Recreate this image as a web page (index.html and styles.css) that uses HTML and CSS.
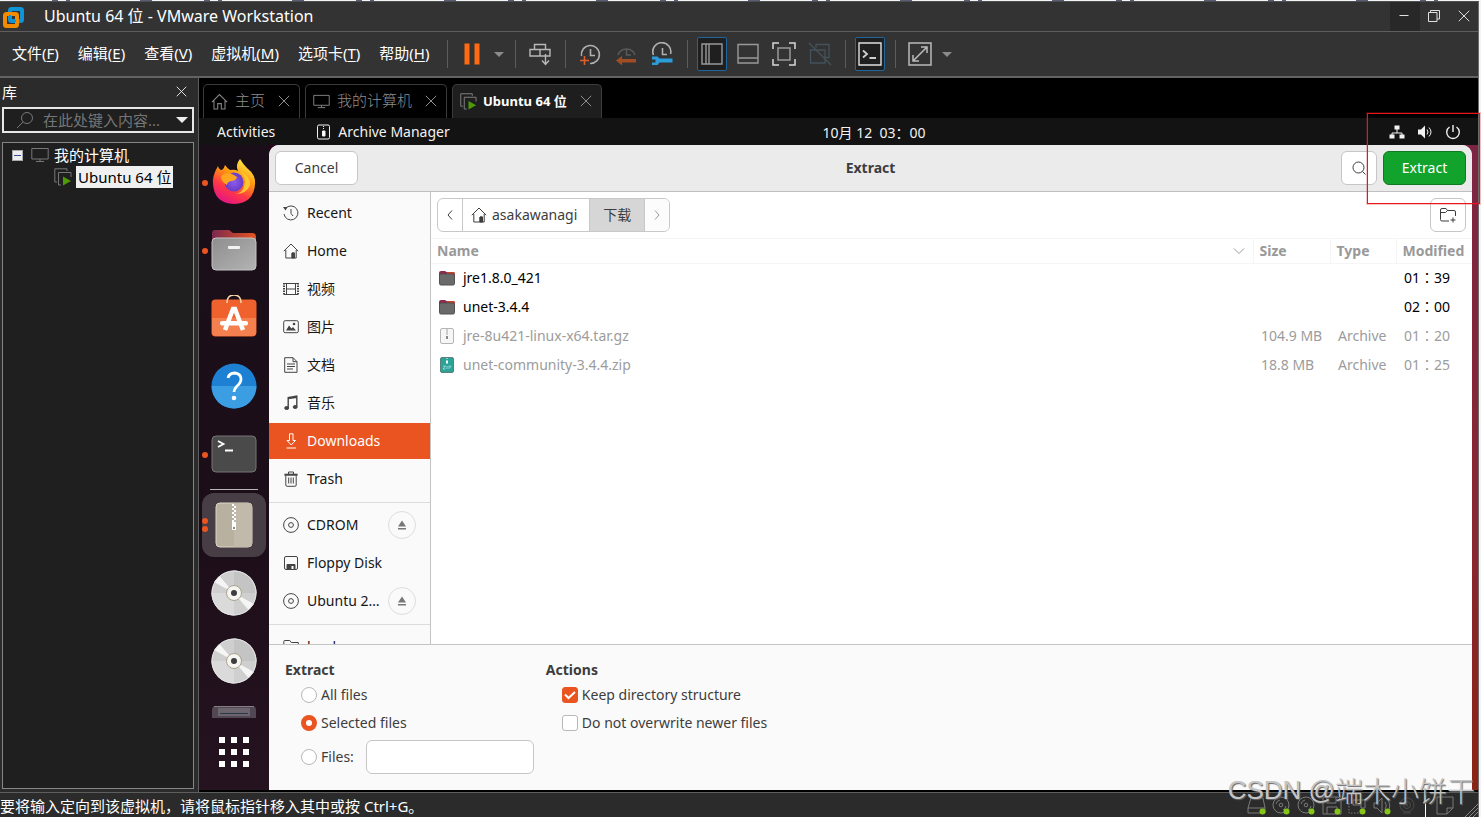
FILE: index.html
```html
<!DOCTYPE html>
<html lang="zh-CN">
<head>
<meta charset="utf-8">
<title>Ubuntu 64 位 - VMware Workstation</title>
<link rel="stylesheet" href="styles.css">
</head>
<body>
<svg class="defs" aria-hidden="true">
  <symbol id="i-close" viewBox="0 0 12 12"><path d="M.8.8l10.400 10.400M11.200.8L.8 11.200"/></symbol>
  <symbol id="i-home" viewBox="0 0 16 16"><path d="M.8 8.200L8 1l7.200 7.200M2.800 7v8h10.400V7M9 15v-5h2.500v5"/><path d="M9 10h2.500v5H9z" fill="currentColor"/></symbol>
  <symbol id="i-home-line" viewBox="0 0 16 16"><path d="M.8 8.500L8 1.500l7.200 7M2.800 7v8h3.500v-5h3.400v5h3.500V7"/></symbol>
  <symbol id="i-monitor" viewBox="0 0 18 16"><path d="M.8 1.500h16.400v10.500H.8zM9 12v2M5 14.500h8"/></symbol>
  <symbol id="i-vm" viewBox="0 0 18 18"><path d="M3 14H.8V.8H13V3M7 17H4.500V4.500H17V9"/><path d="M9 8.500l8 4.500-8 4.500z" fill="#4e9a06" stroke="none"/></symbol>
  <symbol id="i-disc" viewBox="0 0 16 16"><circle cx="8" cy="8" r="7.400"/><circle cx="8" cy="8" r="2.400"/></symbol>
  <symbol id="i-eject" viewBox="0 0 10 10"><path d="M5 .5L9 6.500H1zM1 8h8v1.500H1z" fill="#777" stroke="none"/></symbol>
  <symbol id="i-dvd" viewBox="0 0 46 46">
    <circle cx="23" cy="23" r="22.500" fill="#cfcfcf"/>
    <path d="M23 23L23 .5A22.500 22.500 0 0 1 45.500 23z" fill="#c4c4c4"/><path d="M23 23v22.500A22.500 22.500 0 0 1 .5 23z" fill="#dadada"/>
    <path d="M23 23L3 12 8.500 6zM23 23l20 11-5.500 6z" fill="#f5f5f5"/>
    <circle cx="23" cy="23" r="22" fill="none" stroke="#e4e4e4"/>
    <circle cx="23" cy="23" r="7.500" fill="#f6f5f2" stroke="#aca38d"/><circle cx="23" cy="23" r="3" fill="#3d3d3d"/>
  </symbol>
  <symbol id="i-folder" viewBox="0 0 16 16">
    <path d="M0 3a2 2 0 0 1 2-2h4l1.500 1H14a2 2 0 0 1 2 2v4H0z" fill="#8c2a48" stroke="none"/><path d="M8 2h6a2 2 0 0 1 2 2v3H8z" fill="#c8412b" stroke="none"/>
    <rect x=".5" y="4" width="15" height="11" rx="1.500" fill="#6a6a6a" stroke="#505050"/>
  </symbol>
  <symbol id="i-cd" viewBox="0 0 20 20"><circle cx="9" cy="9" r="8"/><circle cx="9" cy="9" r="1.800"/><path d="M4 8a5 5 0 0 1 4-4M14 10a5 5 0 0 1-3 4"/><circle cx="14.500" cy="15.500" r="3" fill="#84c516" stroke="none"/></symbol>
</svg>

<div class="desktop-edge"></div>
<div class="window">
  <header class="titlebar">
    <svg class="logo" viewBox="0 0 22 22"><g fill="none" stroke-width="4"><rect x="8" y="3" width="12" height="12" rx="1.500" stroke="#0f95d7"/><rect x="3" y="8" width="12" height="12" rx="1.500" stroke="#f38b00"/><path d="M8 9V15H14" stroke="#0f95d7" stroke-width="2"/></g></svg>
    <h1 class="title">Ubuntu 64 位 - VMware Workstation</h1>
    <div class="win-controls">
      <button class="win-btn win-btn-min" aria-label="最小化"><svg class="ico12" viewBox="0 0 12 12"><path d="M1.500 5.500h9"/></svg></button>
      <button class="win-btn" aria-label="还原"><svg class="ico12" viewBox="0 0 12 12"><path d="M.5 2.500h8.500v9H.5zM2.500 2.500V.5h9v8.500H9"/></svg></button>
      <button class="win-btn win-btn-close" aria-label="关闭"><svg class="ico12"><use href="#i-close"/></svg></button>
    </div>
  </header>

  <div class="menubar">
    <nav class="menus">
      <button class="menu">文件(<u>F</u>)</button>
      <button class="menu">编辑(<u>E</u>)</button>
      <button class="menu">查看(<u>V</u>)</button>
      <button class="menu">虚拟机(<u>M</u>)</button>
      <button class="menu">选项卡(<u>T</u>)</button>
      <button class="menu">帮助(<u>H</u>)</button>
    </nav>
    <div class="tools">
      <span class="tool-sep"></span>
      <button class="tool" aria-label="挂起"><svg class="ico24" viewBox="0 0 24 24"><path d="M4.500 1.500h5v21h-5zM14.500 1.500h5v21h-5z" fill="#ff6a13" stroke="none"/></svg></button>
      <button class="caret" aria-label="电源选项"></button>
      <span class="tool-sep"></span>
      <button class="tool" aria-label="发送 Ctrl+Alt+Del"><svg class="ico24" viewBox="0 0 24 24"><path d="M6.500 7.500v-5h11v5M2 7.500h20v6.500H2zM12 7.500V14M17.500 12v10M14 18.500l3.500 4 3.500-4" stroke="#b8b8b8" stroke-width="1.400"/></svg></button>
      <span class="tool-sep"></span>
      <button class="tool" aria-label="拍摄快照"><svg class="ico24" viewBox="0 0 24 24"><path d="M3.500 14A9 9 0 1 1 12 21.500M12.500 7v6.500H17" stroke="#b0b0b0" stroke-width="1.600"/><path d="M6.500 14v9M2 18.500h9" stroke="#e0602b" stroke-width="1.600"/></svg></button>
      <button class="tool" aria-label="恢复快照"><svg class="ico24" viewBox="0 0 24 24"><path d="M4 13A9 9 0 0 1 21 13M12.500 7v6H17" stroke="#5a5a5a" stroke-width="1.500"/><path d="M2 18.500l6-4.500v3h14v3.500H8v3z" fill="#a04d24" stroke="none"/></svg></button>
      <button class="tool" aria-label="管理快照"><svg class="ico24" viewBox="0 0 24 24"><path d="M3.500 13A9 9 0 1 1 20.500 12M12.500 6v6.500H17" stroke="#b0b0b0" stroke-width="1.600"/><path d="M2 14.500h5.500l2 2H22.500v4H9.500l-2 2.500H2V20.500h3.500v-3H2z" fill="#2d9cdb" stroke="none"/></svg></button>
      <span class="tool-sep"></span>
      <button class="tool tool-on" aria-label="显示库"><svg class="ico24" viewBox="0 0 24 24"><path d="M2 2h20v20H2zM9 2v20M6 2v20" stroke="#999" stroke-width="1.400"/></svg></button>
      <button class="tool" aria-label="缩略图栏"><svg class="ico24" viewBox="0 0 24 24"><path d="M2 2.500h20v18.500H2zM2 16h20" stroke="#999" stroke-width="1.400"/></svg></button>
      <button class="tool" aria-label="全屏"><svg class="ico24" viewBox="0 0 24 24"><path d="M1 7V1h6M17 1h6v6M23 17v6h-6M7 23H1v-6" stroke="#d8d8d8" stroke-width="1.500"/><path d="M6 6h12v12H6z" stroke="#999" stroke-width="1.500"/></svg></button>
      <button class="tool" aria-label="Unity" disabled><svg class="ico24" viewBox="0 0 24 24"><path d="M8 6V2.500h13v13h-4M2.500 8H17v13H2.500zM1 1l22 22" stroke="#44525c" stroke-width="1.300"/></svg></button>
      <span class="tool-sep"></span>
      <button class="tool tool-on" aria-label="控制台视图"><svg class="ico24" viewBox="0 0 24 24"><path d="M1 1h22v22H1z" stroke="#e0e0e0" stroke-width="1.400"/><path d="M5 8.500l4 3.500-4 3.500M11.500 16H18" stroke="#d0d0d0" stroke-width="1.800"/></svg></button>
      <span class="tool-sep"></span>
      <button class="tool" aria-label="自由拉伸"><svg class="ico24" viewBox="0 0 24 24"><path d="M1 1h22v22H1z" stroke="#bbb" stroke-width="1.500"/><path d="M5 19L19 5M13 5h6v6M5 13v6h6" stroke="#bbb" stroke-width="1.500"/></svg></button>
      <button class="caret" aria-label="拉伸选项"></button>
    </div>
  </div>

  <div class="workspace">
    <aside class="library">
      <div class="library-head"><h2 class="library-title">库</h2><button class="plain" aria-label="关闭库"><svg class="ico12 bright"><use href="#i-close"/></svg></button></div>
      <div class="search">
        <svg class="search-ico" viewBox="0 0 18 18"><circle cx="11" cy="7" r="5.500"/><path d="M7 11l-6 6"/></svg>
        <input class="search-input" type="text" placeholder="在此处键入内容..." aria-label="搜索">
        <span class="search-caret"></span>
      </div>
      <div class="tree">
        <div class="tree-row"><button class="expander" aria-label="折叠"></button><svg class="tree-ico"><use href="#i-monitor"/></svg><span>我的计算机</span></div>
        <div class="tree-row tree-child"><svg class="tree-ico"><use href="#i-vm"/></svg><span class="tree-selected">Ubuntu 64 位</span></div>
      </div>
    </aside>

    <main class="console">
      <div class="tabs">
        <div class="tab"><svg class="tab-ico"><use href="#i-home-line"/></svg><span class="tab-label">主页</span><button class="plain" aria-label="关闭主页"><svg class="ico12"><use href="#i-close"/></svg></button></div>
        <div class="tab"><svg class="tab-ico"><use href="#i-monitor"/></svg><span class="tab-label">我的计算机</span><button class="plain" aria-label="关闭我的计算机"><svg class="ico12"><use href="#i-close"/></svg></button></div>
        <div class="tab tab-active"><svg class="tab-ico"><use href="#i-vm"/></svg><span class="tab-label">Ubuntu 64 位</span><button class="plain" aria-label="关闭 Ubuntu"><svg class="ico12"><use href="#i-close"/></svg></button></div>
      </div>

      <div class="guest">
        <div class="topbar">
          <div class="topbar-left">
            <button class="top-btn">Activities</button>
            <button class="top-btn top-app"><svg class="app-ico" viewBox="0 0 14 16"><rect x="1" y="1" width="12" height="14" rx="1.500"/><path d="M7 2v4" stroke-dasharray="1 1"/><path d="M6 7h2.500v5H6z" fill="#fff"/></svg>Archive Manager</button>
          </div>
          <time class="clock">10月 12&nbsp; 03：00</time>
          <div class="topbar-right">
            <svg class="status-ico" viewBox="0 0 16 16"><path d="M8 5v4M3 12V9h10v3"/><path d="M5.500 1.500h5v4h-5zM.5 10.500h5v4h-5zM10.500 10.500h5v4h-5z" fill="#f2f2f2" stroke="none"/></svg>
            <svg class="status-ico" viewBox="0 0 16 16"><path d="M1 5.500h3L8 1.500v13l-4-4H1z" fill="#f2f2f2" stroke="none"/><path d="M10 5.500q2 2.500 0 5M12 3.500q4 4.500 0 9"/></svg>
            <svg class="status-ico" viewBox="0 0 16 16"><path d="M8 1v7M4.500 3A6.300 6.300 0 1 0 11.500 3" stroke-width="1.400"/></svg>
          </div>
        </div>

        <div class="desktop">
          <nav class="dock">
            <button class="dock-item run1" aria-label="Firefox"><svg class="dock-ico" viewBox="0 0 46 46">
              <defs><linearGradient id="fx" x1=".8" y1="0" x2=".3" y2="1"><stop offset="0" stop-color="#fff44f"/><stop offset=".4" stop-color="#ff980e"/><stop offset=".7" stop-color="#ff3647"/><stop offset="1" stop-color="#e31587"/></linearGradient><radialGradient id="fp"><stop offset="0" stop-color="#8b5cf0"/><stop offset="1" stop-color="#6b3bc4"/></radialGradient></defs>
              <path d="M7 7q1 4 4 4 2-1 3-5 2 3 5 5 5-1 8 1-3-6 2-12 3 5 7 9 9 7 8 16-1 19-21 20Q3 44 2 25 1 17 7 7z" fill="url(#fx)"/>
              <circle cx="23" cy="23" r="9.500" fill="url(#fp)"/>
              <path d="M10 17q6-5 11-2l5 3q-1 4-6 4-4 1-4 4-6-3-6-9z" fill="#ffa51e"/><path d="M28 12q9 6 5 16-2 6-9 7 12 0 15-9 1-9-11-14z" fill="#ffc52e"/></svg></button>
            <button class="dock-item run1" aria-label="Files"><svg class="dock-ico" viewBox="0 0 46 46"><defs><linearGradient id="fl"><stop offset="0" stop-color="#7a2850"/><stop offset="1" stop-color="#e95420"/></linearGradient><linearGradient id="fg" x1="0" y1="0" x2="1" y2="1"><stop offset="0" stop-color="#8e8e8e"/><stop offset="1" stop-color="#b3b3b3"/></linearGradient></defs><path d="M1 6q0-3 3-3h14l4 3h19q4 0 4 4v8H1z" fill="url(#fl)"/><rect x="1" y="11" width="44" height="32" rx="4" fill="url(#fg)" stroke="#c4c4c4"/><rect x="17" y="19" width="12" height="3" rx="1" fill="#f2f2f2"/></svg></button>
            <button class="dock-item" aria-label="Ubuntu Software"><svg class="dock-ico" viewBox="0 0 46 46"><rect x=".5" y="4.500" width="45" height="37" rx="4" fill="#f0622d"/><path d="M1 23h44v14q0 4-4 4H5q-4 0-4-4z" fill="#f47f4f"/><path d="M16 8q0-8 7-8t7 8" fill="none" stroke="#f5d7a8" stroke-width="1.500"/><path d="M14 35l8-21h2l8 21" fill="none" stroke="#fff" stroke-width="4.500"/><rect x="9" y="26" width="28" height="4.500" rx="2" fill="#fff"/></svg></button>
            <button class="dock-item" aria-label="Help"><svg class="dock-ico" viewBox="0 0 46 46"><circle cx="23" cy="23" r="22.500" fill="#1d80d3"/><path d="M.5 23h45a22.500 22.500 0 0 1-45 0z" fill="#3b9de2"/><path d="M17 15q1-5 7-5 6 1 6 6 0 4-4 7-3 3-3 6" fill="none" stroke="#fff" stroke-width="2.800"/><circle cx="23" cy="35" r="2.300" fill="#fff"/></svg></button>
            <button class="dock-item run1" aria-label="Terminal"><svg class="dock-ico" viewBox="0 0 46 46"><rect x="1" y="5" width="44" height="36" rx="4" fill="#4a4a4a" stroke="#747474"/><path d="M7 10l5.500 3L7 16M14 19.500h8" fill="none" stroke="#fff" stroke-width="1.800"/></svg></button>
            <hr class="dock-sep">
            <button class="dock-item dock-current run2" aria-label="Archive Manager"><svg class="dock-ico" viewBox="0 0 46 46"><rect x="5" y="1" width="36" height="44" rx="4" fill="#b9b1a0" stroke="#dcd7c8"/><path d="M23 1h14q4 0 4 4v36q0 4-4 4H23z" fill="#c1baab"/><path d="M22 2v18" stroke="#fff" stroke-width="2" stroke-dasharray="2 2"/><path d="M24 4v18" stroke="#fff" stroke-width="2" stroke-dasharray="2 2"/><path d="M21 20h4v8h-4z" fill="#fff"/><path d="M22 25h2v2h-2z" fill="#888"/></svg></button>
            <button class="dock-item" aria-label="CDROM"><svg class="dock-ico"><use href="#i-dvd"/></svg></button>
            <button class="dock-item" aria-label="Ubuntu 22.04"><svg class="dock-ico"><use href="#i-dvd"/></svg></button>
            <button class="dock-clip" aria-label="Floppy Disk"><svg class="floppy-ico" viewBox="0 0 46 13"><path d="M1 13V5q0-4 4-4h36q4 0 4 4v8z" fill="#514853"/><path d="M3 1.500h40" stroke="#857e86"/><path d="M7 3h32v8H7z" fill="#6d656e"/><path d="M9 8.500h28" stroke="#27394a"/></svg></button>
            <button class="apps" aria-label="Show Applications"><svg class="apps-ico" viewBox="0 0 30 30"><path d="M3 0v30M15 0v30M27 0v30" stroke="#fff" stroke-width="6" stroke-dasharray="6 6"/></svg></button>
          </nav>

          <section class="dialog">
            <header class="dialog-head">
              <button class="btn btn-text">Cancel</button>
              <h2 class="dialog-title">Extract</h2>
              <div class="head-actions">
                <button class="btn btn-icon" aria-label="Search"><svg class="ico16" viewBox="0 0 16 16"><circle cx="7.500" cy="7.500" r="5.500"/><path d="M11.500 11.500l3 3"/></svg></button>
                <button class="btn btn-text btn-go">Extract</button>
              </div>
            </header>
            <div class="dialog-body">
              <nav class="places">
                <a class="place" href="#"><svg class="ico16" viewBox="0 0 16 16"><path d="M2.500 3.500A7 7 0 1 1 1 9M8 4v4.500l2 2.500"/><path d="M0 2l4.500 0-2 3.500z" fill="currentColor" stroke="none"/></svg>Recent</a>
                <a class="place" href="#"><svg class="ico16"><use href="#i-home"/></svg>Home</a>
                <a class="place" href="#"><svg class="ico16" viewBox="0 0 16 16"><path d="M1 2v12M15 2v12" stroke-width="2" stroke-dasharray="1.500 1"/><path d="M3.500 2v12M12.500 2v12M1 2.500h14M1 13.500h14M3.500 8h9"/></svg>视频</a>
                <a class="place" href="#"><svg class="ico16" viewBox="0 0 16 16"><rect x=".7" y="1.700" width="14.600" height="12" rx="1.500"/><path d="M3 11.500l3-5 2.500 3 1.500-1.500 3 3.500z" fill="currentColor" stroke="none"/><circle cx="11" cy="5" r="1.300" fill="currentColor" stroke="none"/></svg>图片</a>
                <a class="place" href="#"><svg class="ico16" viewBox="0 0 16 16"><path d="M1.700.7h8.300l4 4v10.600H1.700zM10 .7v4h4M4 7h8M4 9.500h8M4 12h6"/></svg>文档</a>
                <a class="place" href="#"><svg class="ico16" viewBox="0 0 16 16"><path d="M5.200 12.500V2.500L13.800 1v10.500M5.200 3.500l8.600-1.300" stroke-width="1.400"/><ellipse cx="3.700" cy="13" rx="2" ry="1.500" fill="currentColor"/><ellipse cx="12.200" cy="12" rx="2" ry="1.500" fill="currentColor"/></svg>音乐</a>
                <a class="place place-active" href="#"><svg class="ico16" viewBox="0 0 16 16"><path d="M6.500.8h3.500V7.500h2.500L8.200 12 4 7.500h2.500zM3.500 15h9.500"/></svg>Downloads</a>
                <a class="place" href="#"><svg class="ico16" viewBox="0 0 16 16"><path d="M1.500 4h13M5.500 3V1h5v2M2.800 4.500v9.500q0 1.300 1.300 1.300h7.800q1.300 0 1.300-1.300V4.500M5.700 6.500v6M8 6.500v6M10.300 6.500v6"/><path d="M1.500 2.700h13v1.800h-13z" fill="currentColor" stroke="none"/></svg>Trash</a>
                <hr class="places-sep">
                <div class="place-line"><a class="place" href="#"><svg class="ico16"><use href="#i-disc"/></svg>CDROM</a><button class="eject" aria-label="Eject CDROM"><svg class="eject-ico"><use href="#i-eject"/></svg></button></div>
                <a class="place" href="#"><svg class="ico16" viewBox="0 0 16 16"><rect x="1.500" y="1.500" width="13" height="13" rx="1.500"/><path d="M4 14V9.500h8V14z" fill="currentColor"/><path d="M8.500 11h2v3h-2z" fill="#fff" stroke="none"/></svg>Floppy Disk</a>
                <div class="place-line"><a class="place" href="#"><svg class="ico16"><use href="#i-disc"/></svg>Ubuntu 2…</a><button class="eject" aria-label="Eject Ubuntu"><svg class="eject-ico"><use href="#i-eject"/></svg></button></div>
                <hr class="places-sep">
                <a class="place" href="#"><svg class="ico16" viewBox="0 0 16 16"><path d="M.8 14V2.500q0-1 1-1h5l1.500 2h7v10.500z"/></svg>book</a>
              </nav>
              <section class="files">
                <div class="files-bar">
                  <div class="path">
                    <button class="crumb crumb-nav" aria-label="Back"><svg class="ico12" viewBox="0 0 12 12"><path d="M8 1.500L4 6l4 4.500"/></svg></button>
                    <button class="crumb"><svg class="ico16"><use href="#i-home"/></svg>asakawanagi</button>
                    <button class="crumb crumb-on">下载</button>
                    <button class="crumb crumb-nav crumb-off" aria-label="Forward"><svg class="ico12" viewBox="0 0 12 12"><path d="M4 1.500L8 6l-4 4.500"/></svg></button>
                  </div>
                  <button class="btn btn-icon" aria-label="New folder"><svg class="folder-new" viewBox="0 0 18 16"><path d="M10 14H3q-1.500 0-1.500-1.500V3q0-1.500 1.500-1.500h4l1.500 2H15q1.500 0 1.500 1.500v4M1.500 5.500h5l2-2M14 10.500v5M11.500 13h5"/></svg></button>
                </div>
                <table class="list">
                  <thead><tr><th class="c-name"><span class="th-in">Name<svg class="ico12" viewBox="0 0 12 12"><path d="M1 3.500l5 5 5-5"/></svg></span></th><th class="c-size">Size</th><th class="c-type">Type</th><th class="c-mod">Modified</th></tr></thead>
                  <tbody>
                    <tr><td><span class="file"><svg class="ico16"><use href="#i-folder"/></svg>jre1.8.0_421</span></td><td></td><td></td><td class="time">01：39</td></tr>
                    <tr><td><span class="file"><svg class="ico16"><use href="#i-folder"/></svg>unet-3.4.4</span></td><td></td><td></td><td class="time">02：00</td></tr>
                    <tr class="dim"><td><span class="file"><svg class="ico16" viewBox="0 0 16 16"><rect x="1.500" y=".5" width="13" height="15" rx="1.500" fill="#f6f6f6" stroke="#b5b5b5"/><path d="M8 1.500v6" stroke="#888" stroke-width="1.500" stroke-dasharray="1 1"/><path d="M7 8h2v3H7z" fill="#888" stroke="none"/></svg>jre-8u421-linux-x64.tar.gz</span></td><td>104.9 MB</td><td>Archive</td><td class="time">01：20</td></tr>
                    <tr class="dim"><td><span class="file"><svg class="ico16" viewBox="0 0 16 16"><rect x="1.500" y=".5" width="13" height="15" rx="1.500" fill="#2ba399" stroke="#5a817e"/><path d="M8 1v3" stroke="#fff" stroke-dasharray="1 1"/><path d="M7 4h2v2.500H7z" fill="#fff" stroke="none"/><path d="M4 9h2.500L4 12h2.500M8 9v3M10 12V9h1.500q1 1-.5 1.500" stroke="#a9e0da" stroke-width=".8"/></svg>unet-community-3.4.4.zip</span></td><td>18.8 MB</td><td>Archive</td><td class="time">01：25</td></tr>
                  </tbody>
                </table>
              </section>
            </div>
            <form class="options">
              <fieldset class="group"><legend class="legend">Extract</legend>
                <label class="opt"><input class="radio" type="radio" name="scope">All files</label>
                <label class="opt"><input class="radio" type="radio" name="scope" checked>Selected files</label>
                <div class="opt-files"><label class="opt"><input class="radio" type="radio" name="scope">Files:</label><input class="pattern" type="text" aria-label="Files"></div>
              </fieldset>
              <fieldset class="group"><legend class="legend">Actions</legend>
                <label class="opt"><span class="tick"><input class="check" type="checkbox" checked><svg class="tick-mark" viewBox="0 0 16 16"><path d="M3 7.500l3.500 3.500L13 5"/></svg></span>Keep directory structure</label>
                <label class="opt"><input class="check" type="checkbox">Do not overwrite newer files</label>
              </fieldset>
            </form>
          </section>
        </div>
      </div>
    </main>
  </div>

  <footer class="statusbar">
    <span class="status-text">要将输入定向到该虚拟机，请将鼠标指针移入其中或按 Ctrl+G。</span>
    <div class="devices">
      <svg class="dev" viewBox="0 0 20 20"><path d="M1 12L4 2h12l2 10v5H1zM1 12h17"/><circle cx="15.500" cy="15.500" r="3" fill="#84c516" stroke="none"/></svg>
      <svg class="dev"><use href="#i-cd"/></svg>
      <svg class="dev"><use href="#i-cd"/></svg>
      <svg class="dev" viewBox="0 0 20 20"><path d="M1 1h15l3 3v14H1zM5 1v6h9V1M5 18v-7h10v7"/><circle cx="15.500" cy="15.500" r="3" fill="#84c516" stroke="none"/></svg>
      <svg class="dev" viewBox="0 0 20 20"><path d="M6 4h12v8h-4v-3H6z"/><path d="M2 7v10h11" stroke-dasharray="1.500 1.500"/><circle cx="15.500" cy="15.500" r="3" fill="#84c516" stroke="none"/></svg>
      <svg class="dev" viewBox="0 0 20 20"><path d="M2 7h3l5-5v15l-5-5H2zM13 6q3 4 0 7M15 3q5 6 1 12"/><circle cx="15.500" cy="15.500" r="3" fill="#84c516" stroke="none"/></svg>
      <svg class="dev dev-off" viewBox="0 0 20 20"><circle cx="10" cy="9" r="7"/><circle cx="10" cy="9" r="3.500"/><circle cx="10" cy="9" r="1"/><path d="M6 17h8"/></svg>
      <span class="dev-sep"></span>
      <svg class="dev" viewBox="0 0 20 20"><path d="M2 1h16v11l-6 6H2zM12 18v-6h6"/></svg>
      <svg class="grip" viewBox="0 0 14 14"><path d="M1 14L14 1M5 14l9-9M9 14l5-5" stroke="#888"/></svg>
    </div>
  </footer>
  <div class="highlight"></div>
  <div class="watermark">CSDN @<span class="watermark-name">端木小饼干</span></div>
</div>
</body>
</html>
```
FILE: styles.css
```css
* { box-sizing: border-box; }
html, body { margin: 0; height: 100%; }
body {
  display: flex; flex-direction: column; min-height: 100vh;
  background: #f4f4f6; color: #fff;
  font: 15px/20px "Noto Sans", "Noto Sans CJK SC", sans-serif;
}
h1, h2 { margin: 0; font: inherit; }
button { margin: 0; padding: 0; border: 0; background: none; color: inherit; font: inherit; }
svg { display: block; flex: none; fill: none; stroke: currentColor; }
.defs { position: absolute; width: 0; height: 0; }
.ico12 { width: 12px; height: 12px; }
.ico16 { width: 16px; height: 16px; }
.ico24 { width: 24px; height: 24px; stroke: none; }

.desktop-edge {
  flex: none; height: 1px;
  background: repeating-linear-gradient(90deg, #f4f4f6 0 52px, #5c5c78 52px 58px, #f4f4f6 58px 66px, #5c5c78 66px 70px, #f4f4f6 70px 140px, #5c5c78 140px 152px);
}
.window {
  position: relative; flex: 1; min-height: 0; margin-right: 2px;
  display: flex; flex-direction: column;
  background: #2b2b2b; border-right: 1px solid #6b6b6b; border-top: 1px solid #4b504f;
}

.titlebar { flex: none; display: flex; align-items: center; height: 30px; padding-left: 2px; background: #333; border-bottom: 1px solid #5e5e5e; }
.logo { width: 22px; height: 22px; }
.title { flex: 1; padding: 0 0 2px 20px; white-space: nowrap; font-size: 16px; }
.win-controls { display: flex; align-self: stretch; color: #e0e0e0; }
.win-btn { display: flex; align-items: center; justify-content: center; width: 30px; padding: 0 3px 1px 0; }
.win-btn-min { background: #282828; }
.win-btn-close { width: 28px; padding-right: 0; }

.menubar { flex: none; display: flex; align-items: center; gap: 14px; height: 46px; padding-left: 12px; background: #333; border-bottom: 2px solid #636363; }
.menus { display: flex; gap: 19px; padding-bottom: 3px; white-space: nowrap; }
.menu u { text-underline-offset: 2px; }
.tools { display: flex; align-items: center; gap: 6px; }
.tool-sep { width: 1px; height: 28px; margin: 0 3px 0 4px; background: #5c5c5c; }
.tool { display: flex; align-items: center; justify-content: center; width: 30px; height: 34px; }
.tool-on { background: #1f1f1f; border: 1px solid #20669c; border-radius: 2px; }
.caret { width: 12px; height: 20px; display: flex; align-items: center; justify-content: center; }
.caret::before { content: ""; border: 5px solid transparent; border-top-color: #8a8a8a; border-bottom: 0; }

.workspace { flex: 1; min-height: 0; display: flex; }
.library { flex: none; width: 199px; display: flex; flex-direction: column; padding: 0 4px 3px 2px; border-right: 1px solid #5e5e5e; }
.library-head { display: flex; align-items: center; justify-content: space-between; height: 29px; padding: 0 7px 2px 0; }
.plain { display: flex; color: #8e8e8e; }
.bright { color: #eee; width: 11px; height: 11px; }
.search { display: flex; align-items: center; height: 26px; border: 2px solid #e8e8e8; background: #1f1f1f; color: #777; padding: 0 4px 0 12px; gap: 9px; }
.search-ico { width: 18px; height: 18px; }
.search-input { flex: 1; min-width: 0; padding: 0; border: 0; background: none; color: #ddd; font: inherit; outline: 0; }
.search-input::placeholder { color: #757575; opacity: 1; }
.search-caret { border: 6px solid transparent; border-top-color: #ededed; border-bottom: 0; }
.tree { flex: 1; margin-top: 9px; padding: 1px 8px; background: #1f1f1f; border: 1px solid #868686; }
.tree-row { display: flex; align-items: center; gap: 5px; height: 22px; white-space: nowrap; }
.tree-child { padding-left: 43px; gap: 4px; }
.tree-ico { width: 18px; height: 18px; color: #777; }
.expander { display: flex; align-items: center; justify-content: center; width: 11px; height: 11px; margin: 0 3px 0 1px; background: #eee; border: 1px solid #aaa; }
.expander::before { content: ""; width: 7px; height: 1px; background: #345098; }
.tree-selected { padding: 1px 2px; background: #f0f0f0; color: #000; }

.console { flex: 1; min-width: 0; display: flex; flex-direction: column; background: #000; }
.tabs { flex: none; display: flex; align-items: flex-end; gap: 5px; height: 40px; padding-left: 4px; }
.tab { display: flex; align-items: center; gap: 7px; height: 34px; padding: 0 9px 1px 7px; border: 1px solid #3b3b3b; border-bottom: 0; border-radius: 5px 5px 0 0; color: #8e8e8e; white-space: nowrap; }
.tab-ico { width: 17px; height: 17px; color: #858585; }
.tab-label { margin-right: 6px; padding-bottom: 2px; font-weight: 300; }
.tab-active { background: #1e1e1e; gap: 6px; }
.tab-active .tab-label { margin-right: 7px; padding-bottom: 0; color: #fff; font-weight: 700; font-size: 13px; }

.guest { flex: 1; min-height: 0; display: flex; flex-direction: column; padding-bottom: 2px; font-size: 14px; }
.topbar { flex: none; display: grid; grid-template-columns: 1fr auto 1fr; align-items: center; height: 27px; padding: 0 17px 0 18px; background: #131313; color: #f2f2f2; }
.topbar-left { display: flex; gap: 41px; white-space: nowrap; }
.top-app { display: flex; align-items: center; gap: 7px; }
.app-ico { width: 15px; height: 16px; }
.clock { padding-top: 3px; padding-left: 70px; font-family: "Noto Sans", "Noto Sans CJK TC", sans-serif; }
.topbar-right { display: flex; justify-content: flex-end; gap: 12px; }
.status-ico { width: 16px; height: 16px; }

.desktop { flex: 1; min-height: 0; display: flex; padding-right: 6px; background: linear-gradient(90deg, #2c001e 0 80px, transparent 81px), linear-gradient(#7c2543, #8a2630 60%, #8a2413); }
.dock { flex: none; display: flex; flex-direction: column; align-items: center; width: 70px; padding-top: 5px; background: linear-gradient(#1a0f19, #1c0e19 60%, #251320); overflow: hidden; }
.dock-item { position: relative; flex: none; display: flex; align-items: center; justify-content: center; width: 64px; height: 64px; margin-bottom: 4px; border-radius: 12px; }
.dock-ico { width: 46px; height: 46px; stroke: none; }
.dock-current { background: #463d45; }
.run1::before, .run2::before { content: ""; position: absolute; left: 0; top: 30px; width: 6px; height: 6px; border-radius: 50%; background: #e95420; }
.run2::before { top: 25px; box-shadow: 0 8px 0 #e95420; }
.dock-sep { flex: none; width: 48px; height: 1px; margin: -1px 0 3px; border: 0; background: #b9b5b8; }
.dock-clip { margin-top: 8px; }
.floppy-ico { width: 46px; height: 13px; stroke: none; }
.apps { margin-top: 19px; }
.apps-ico { width: 30px; height: 30px; }

.dialog { flex: 1; min-width: 0; display: flex; flex-direction: column; background: #fff; color: #3d3d3d; border-radius: 10px 10px 0 0; overflow: hidden; }
.dialog-head { flex: none; display: grid; grid-template-columns: 1fr auto 1fr; align-items: center; height: 47px; padding: 0 6px; background: #ebebeb; border-bottom: 1px solid #bfbfbf; }
.dialog-title { font-weight: 700; }
.head-actions { display: flex; justify-content: flex-end; gap: 6px; }
.btn { display: flex; align-items: center; justify-content: center; height: 34px; background: #fff; border: 1px solid #c6c6c6; border-radius: 6px; }
.btn-text { width: 83px; justify-self: start; }
.btn-icon { width: 36px; }
.btn-go { background: #12a32c; border-color: #0e7a21; color: #fff; }

.dialog-body { flex: 1; min-height: 0; display: flex; }
.places { flex: none; width: 162px; padding-top: 3px; background: #fafafa; border-right: 1px solid #c4c4c4; overflow: hidden; white-space: nowrap; }
.place { display: flex; align-items: center; gap: 8px; height: 36px; margin-bottom: 2px; padding-left: 14px; text-decoration: none; color: #161616; }
.place .ico16 { color: #444; }
.place-active, .place-active .ico16 { background: #e95420; color: #fff; }
.place-line { display: flex; align-items: center; justify-content: space-between; margin-bottom: 2px; padding-right: 14px; }
.place-line .place { margin-bottom: 0; }
.eject { flex: none; display: flex; align-items: center; justify-content: center; width: 28px; height: 28px; border: 1px solid #dedede; border-radius: 50%; }
.eject-ico { width: 10px; height: 10px; }
.places-sep { height: 1px; margin: 5px 0 4px; border: 0; background: #dcdcdc; }

.files { flex: 1; min-width: 0; }
.files-bar { display: flex; justify-content: space-between; padding: 6px; }
.path { display: flex; height: 34px; border: 1px solid #c8c8c8; border-radius: 6px; overflow: hidden; }
.crumb { display: flex; align-items: center; gap: 5px; padding: 0 12px 0 8px; border-left: 1px solid #c8c8c8; }
.crumb-nav { padding: 0 6px; }
.crumb-nav:first-child { border-left: 0; }
.crumb-on { padding: 0 13px; background: #d6d6d6; }
.crumb-off { color: #999; background: #fcfcfc; }
.folder-new { width: 18px; height: 16px; }
.list { width: 100%; border-collapse: collapse; table-layout: fixed; color: #000; }
.list th { height: 25px; padding: 0 6px; text-align: left; color: #999; border: 1px solid #f5f5f5; border-left: 0; }
.list th:last-child { border-right: 0; }
.list td { height: 29px; padding: 0 8px; white-space: nowrap; }
.list .time { font-family: "Noto Sans", "Noto Sans CJK TC", sans-serif; }
.c-size { width: 77px; }
.c-type { width: 66px; }
.c-mod { width: 76px; }
.th-in { display: flex; align-items: center; justify-content: space-between; padding-right: 2px; }
.file { display: flex; align-items: center; gap: 8px; }
.list .dim { color: #9c9c9c; }

.options { flex: none; display: flex; gap: 12px; padding: 14px 16px 16px; background: #fafafa; border-top: 1px solid #c4c4c4; white-space: nowrap; }
.group { min-width: 0; margin: 0; padding: 0; border: 0; }
.legend { padding: 0; line-height: 22px; font-weight: 700; }
.opt { display: flex; align-items: center; gap: 4px; height: 28px; padding-left: 16px; }
.opt-files { display: flex; align-items: center; gap: 12px; margin-top: 3px; }
.radio, .check { appearance: none; flex: none; display: block; width: 16px; height: 16px; margin: 0; background: #fff; border: 1px solid #b8b8b8; border-radius: 50%; }
.radio:checked { border: 5px solid #e95420; background: #fff; }
.check { border-radius: 3px; }
.check:checked { background: #e95420; border-color: #e95420; }
.tick { display: grid; }
.tick > * { grid-area: 1 / 1; }
.tick-mark { width: 16px; height: 16px; color: #fff; stroke-width: 2; pointer-events: none; }
.pattern { width: 168px; height: 34px; padding: 0 8px; background: #fff; border: 1px solid #c6c6c6; border-radius: 6px; font: inherit; }

.statusbar { flex: none; display: flex; align-items: center; justify-content: space-between; height: 25px; background: #2b2b2b; border-top: 1px solid #5e5e5e; white-space: nowrap; }
.status-text { padding-top: 2px; }
.devices { display: flex; align-items: center; gap: 5px; padding-top: 2px; color: #7a7a7a; }
.dev { width: 20px; height: 20px; }
.dev-off { color: #4b4b4b; }
.dev-sep { width: 1px; height: 22px; margin: 0 4px 0 3px; background: #fff; }
.grip { width: 14px; height: 14px; margin-left: 4px; align-self: flex-end; }

.highlight { position: absolute; right: -2px; top: 111px; width: 113px; height: 91px; border: 1px solid #e8161a; box-shadow: 0 0 0 1px rgba(232, 22, 26, .25); pointer-events: none; }
.watermark { position: absolute; right: 3px; bottom: 9px; display: flex; color: #c4c4c4; font: 300 26px/36px "Liberation Sans", sans-serif; text-shadow: 1px 1px 1px #666; pointer-events: none; white-space: nowrap; }
.watermark-name { font: 300 28px/36px "Noto Sans CJK SC", sans-serif; }
```
